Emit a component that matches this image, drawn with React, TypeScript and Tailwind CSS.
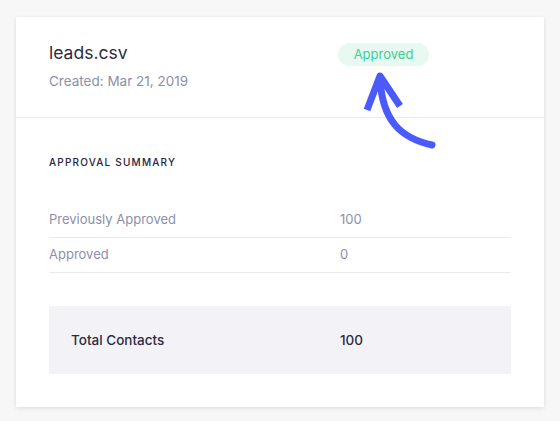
import React from 'react';

const rows = [
  { label: 'Previously Approved', value: '100' },
  { label: 'Approved', value: '0' },
];

const App: React.FC = () => {
  return (
    <div
      className="min-h-[421px] bg-[#f7f7f8] px-4 pt-[17px] pb-[14px]"
      style={{ fontFamily: 'Inter, "Liberation Sans", sans-serif' }}
    >
      <div className="relative w-[528px] bg-white shadow-[0_1px_4px_rgba(0,0,0,0.12)]">
        {/* header */}
        <div className="grid h-[101px] grid-cols-[289px_auto] items-start border-b border-[#ebebef] px-[33px] pt-[24px]">
          <div>
            <div className="text-[17.5px] leading-[24px] text-[#2d2c44]">leads.csv</div>
            <div className="mt-[6px] text-[13.5px] leading-[20px] text-[#8c90a9]">Created: Mar 21, 2019</div>
          </div>
          <div className="mt-[2px] flex h-[23px] w-[91px] items-center justify-center rounded-full bg-[#e7f9f1] text-[13px] text-[#3dcf95]">
            Approved
          </div>
        </div>

        <svg
          className="absolute left-[344px] top-[51px]"
          width="80"
          height="85"
          viewBox="0 0 80 85"
          fill="none"
          stroke="#4b5bfb"
          strokeWidth="7"
          strokeLinejoin="round"
        >
          <path d="M7 42 L20 8 L40 38" />
          <path d="M20 10 C22 52 40 70 72 77" strokeLinecap="round" />
        </svg>

        {/* summary */}
        <div className="px-[33px] pt-[37px] pb-[33px]">
          <div className="text-[10px] leading-[14px] font-medium tracking-[0.12em] text-[#24233a]">APPROVAL SUMMARY</div>
          <div className="mt-[34px]">
            {rows.map((row) => (
              <div
                key={row.label}
                className="grid h-[35px] grid-cols-[291px_auto] items-center border-b border-[#e9e9ee] text-[13px] text-[#8c90a9]"
              >
                <span>{row.label}</span>
                <span>{row.value}</span>
              </div>
            ))}
          </div>
          <div className="mt-[33px] grid h-[68px] grid-cols-[269px_auto] items-center bg-[#f3f3f7] px-[22px] text-[13.5px] font-medium text-[#2c2b43]">
            <span>Total Contacts</span>
            <span>100</span>
          </div>
        </div>
      </div>
    </div>
  );
};

export default App;
